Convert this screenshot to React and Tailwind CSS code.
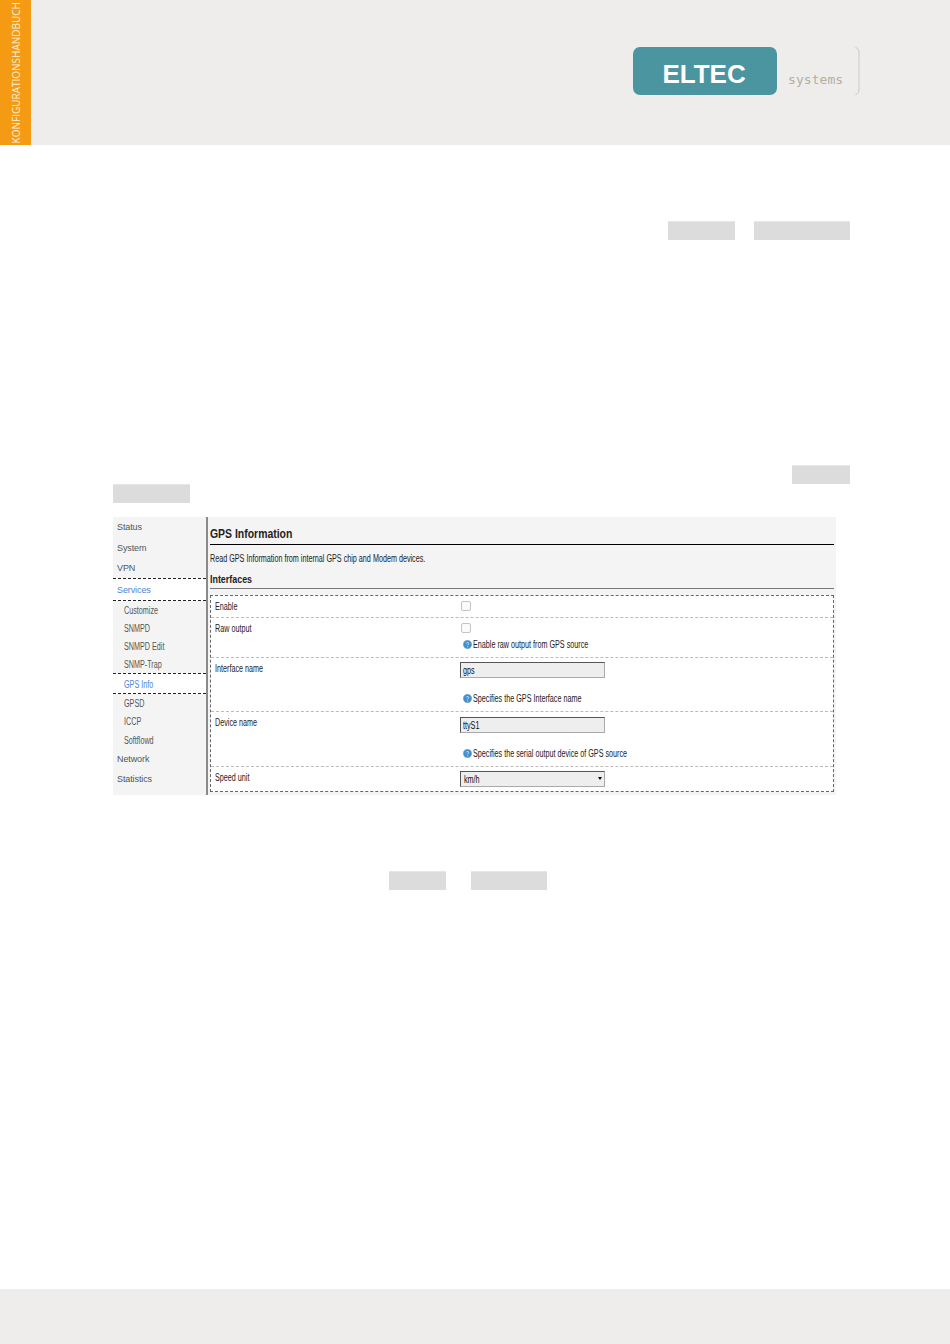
import React from 'react';

const sideItems = [
  { label: 'Status', h: 'h-[20px]' },
  { label: 'System', h: 'h-[21px]' },
  { label: 'VPN', h: 'h-[19px]' },
  { label: 'Services', h: 'h-[23px] pt-[2px]', active: true },
  { label: 'Customize', h: 'h-[19px] pb-[1px]', sub: true },
  { label: 'SNMPD', h: 'h-[18px] pb-[1px]', sub: true },
  { label: 'SNMPD Edit', h: 'h-[18px] pb-[1px]', sub: true },
  { label: 'SNMP-Trap', h: 'h-[17px]', sub: true },
  { label: 'GPS Info', h: 'h-[21px] pt-[1px]', sub: true, active: true },
  { label: 'GPSD', h: 'h-[19px]', sub: true },
  { label: 'ICCP', h: 'h-[18px] pb-[1px]', sub: true },
  { label: 'Softflowd', h: 'h-[19px]', sub: true },
  { label: 'Network', h: 'h-[20px]' },
  { label: 'Statistics', h: 'h-[20px]' },
];

function Redacted({ className }) {
  return <div className={`h-[19px] bg-[#dcdcdc] border-t border-[#e6e6e6] ${className}`} />;
}

// the screenshot in the manual is squeezed horizontally
function Squeezed({ children, className = '' }) {
  return <span className={`inline-block whitespace-nowrap origin-left scale-x-[0.72] ${className}`}>{children}</span>;
}

function HelpIcon() {
  return (
    <svg width="9" height="9" viewBox="0 0 9 9" className="shrink-0">
      <circle cx="4.5" cy="4.5" r="4.2" fill="#3f8fd0" stroke="#7fa9c4" strokeWidth="0.6" />
      <path d="M3.2 3.4c.2-1.2 2.6-1.2 2.6.2 0 .8-1.2.9-1.2 1.7" fill="none" stroke="#d9ecfa" strokeWidth="0.9" />
      <circle cx="4.6" cy="6.7" r="0.55" fill="#d9ecfa" />
    </svg>
  );
}

function Hint({ children }) {
  return (
    <div className="flex items-center pl-[3px] text-[10px] leading-[11px] text-[#222]">
      <HelpIcon />
      <Squeezed className="ml-[1px]">{children}</Squeezed>
    </div>
  );
}

function Checkbox() {
  return <div className="w-[10px] h-[10px] ml-[1px] rounded-[2px] border border-[#c4c4c4] bg-[#fbfbfb]" />;
}

function TextField({ value }) {
  return (
    <div className="w-[145px] h-[16px] pl-[2px] flex items-center bg-[#eeeeee] border border-t-[#555] border-l-[#555] border-r-[#aaa] border-b-[#aaa] text-[10px] text-[#111]">
      <Squeezed>{value}</Squeezed>
    </div>
  );
}

function Row({ label, h, children, last }) {
  return (
    <div className={`flex ${h} ${last ? '' : 'border-b border-dashed border-[#bbb]'}`}>
      <div className="w-[249px] pl-[4px] text-[10px] leading-[11px] pt-[5px] text-[#222]">
        <Squeezed>{label}</Squeezed>
      </div>
      <div className="flex-1">{children}</div>
    </div>
  );
}

function GpsScreenshot() {
  return (
    <div className="flex h-[278px] w-[723px] bg-[#f4f4f4] font-['Liberation_Sans',sans-serif]">
      <div className="w-[93px] shrink-0 pt-[1px]">
        {sideItems.map((item) => (
          <div
            key={item.label}
            className={`${item.h} flex items-center ${item.sub ? 'pl-[11px] text-[10px]' : 'pl-[4px] text-[9px] tracking-[-0.1px]'} ${
              item.active ? 'bg-white text-[#4a86d8] border-y border-dashed border-[#222]' : 'text-[#555]'
            }`}
          >
            {item.sub ? <Squeezed>{item.label}</Squeezed> : item.label}
          </div>
        ))}
      </div>
      <div className="w-[2px] bg-[#8a8a8a]" />
      <div className="flex-1 px-[2px]">
        <div className="h-[28px] pt-[9px] border-b border-black text-[12px] leading-[16px] font-bold text-[#222]">
          <span className="inline-block origin-left scale-x-[0.87]">GPS Information</span>
        </div>
        <div className="h-[26px] pt-[8px] text-[10px] leading-[11px] text-[#222]">
          <Squeezed>Read GPS Information from internal GPS chip and Modem devices.</Squeezed>
        </div>
        <div className="h-[18px] pt-[3px] border-b border-[#777] text-[10px] leading-[12px] font-bold text-[#222]">
          <span className="inline-block origin-left scale-x-[0.89]">Interfaces</span>
        </div>
        <div className="mt-[6px] h-[197px] bg-white border border-dashed border-[#666]">
          <Row label="Enable" h="h-[22px]">
            <div className="pt-[5px]"><Checkbox /></div>
          </Row>
          <Row label="Raw output" h="h-[40px]">
            <div className="pt-[5px]"><Checkbox /></div>
            <div className="mt-[6px]"><Hint>Enable raw output from GPS source</Hint></div>
          </Row>
          <Row label="Interface name" h="h-[54px]">
            <div className="pt-[4px]"><TextField value="gps" /></div>
            <div className="mt-[15px]"><Hint>Specifies the GPS Interface name</Hint></div>
          </Row>
          <Row label="Device name" h="h-[55px]">
            <div className="pt-[5px]"><TextField value="ttyS1" /></div>
            <div className="mt-[15px]"><Hint>Specifies the serial output device of GPS source</Hint></div>
          </Row>
          <Row label="Speed unit" h="h-[24px]" last>
            <div className="pt-[4px]">
              <div className="relative w-[145px] h-[16px] pl-[3px] flex items-center bg-[#eeeeee] border border-t-[#555] border-l-[#555] border-r-[#aaa] border-b-[#aaa] text-[10px] text-[#111]">
                <Squeezed>km/h</Squeezed>
                <span className="absolute right-[2px] top-[5px] border-x-[2px] border-t-[3px] border-x-transparent border-t-black" />
              </div>
            </div>
          </Row>
        </div>
      </div>
    </div>
  );
}

export default function App() {
  return (
    <div className="w-[950px] h-[1344px] flex flex-col bg-white overflow-hidden">
      {/* Header */}
      <div className="h-[145px] shrink-0 flex bg-[#eeedeb]">
        <div className="w-[31px] h-full bg-[#f59a13] flex items-end justify-center pb-[2px]">
          <span className="[writing-mode:vertical-rl] rotate-180 text-[10px] leading-[12px] text-[#fdeed6] font-['Open_Sans',sans-serif] whitespace-nowrap">
            KONFIGURATIONSHANDBUCH
          </span>
        </div>
        <div className="flex-1 flex justify-end pt-[47px] pr-[90px]">
          <div className="w-[144px] h-[48px] rounded-[7px] bg-[#4a95a0] flex items-center justify-center pt-[6px] pr-[1px]">
            <span className="text-white font-['Liberation_Sans',sans-serif] font-bold text-[25px] leading-none scale-x-[1.04]">
              ELTEC
            </span>
          </div>
          <div className="w-[79px] h-[48px] flex items-center pt-[17px] pl-[11px] text-[13px] font-['DejaVu_Sans_Mono',monospace] tracking-[0.05px] text-[#b5aea6]">
            systems
          </div>
          <svg width="5" height="48" viewBox="0 0 5 48" className="-ml-[1px]">
            <path d="M0.5 0.5C3 1 4 3 4 6V42C4 45 3 47 0.5 47.5" fill="none" stroke="#cfc9c2" strokeWidth="1" />
          </svg>
        </div>
      </div>

      {/* Body */}
      <div className="flex-1 pl-[113px] pr-[100px]">
        <div className="mt-[76px] flex justify-end gap-[19px]">
          <Redacted className="w-[67px]" />
          <Redacted className="w-[96px]" />
        </div>
        <div className="mt-[225px] flex justify-end">
          <Redacted className="w-[58px]" />
        </div>
        <Redacted className="w-[77px]" />
        <div className="mt-[14px]">
          <GpsScreenshot />
        </div>
        <div className="mt-[76px] ml-[276px] flex gap-[25px]">
          <Redacted className="w-[57px]" />
          <Redacted className="w-[76px]" />
        </div>
      </div>

      {/* Footer */}
      <div className="h-[55px] shrink-0 bg-[#eeedeb]" />
    </div>
  );
}
